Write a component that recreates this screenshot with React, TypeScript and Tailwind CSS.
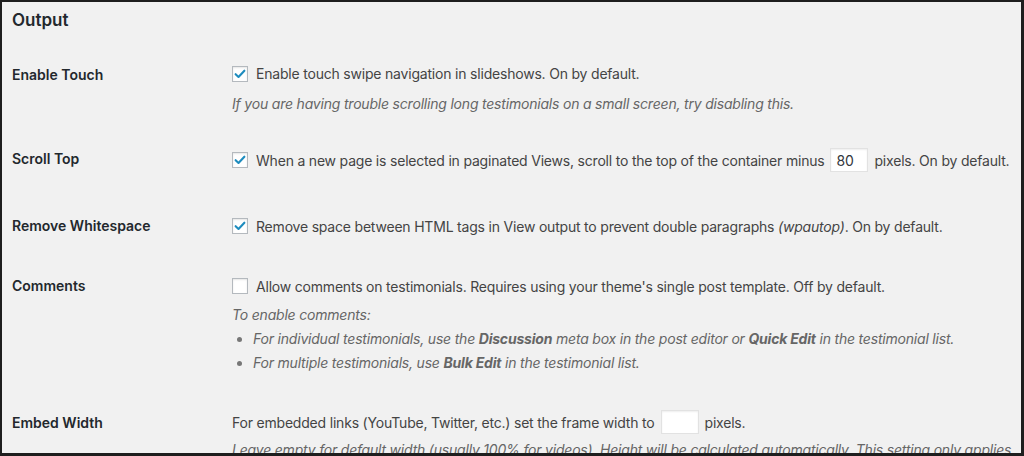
import React from "react";

const Check = ({ checked }: { checked: boolean }) => (
  <span className="inline-flex h-4 w-4 shrink-0 items-center justify-center border border-[#b4b9be] bg-white shadow-[inset_0_1px_2px_rgba(0,0,0,0.1)]">
    {checked && (
      <svg viewBox="0 0 16 16" className="h-[14px] w-[14px]">
        <path d="M3 8.2 L6.3 11.4 L13 4.2" fill="none" stroke="#1e8cbe" strokeWidth="2.4" strokeLinecap="round" strokeLinejoin="round" />
      </svg>
    )}
  </span>
);

const Label = ({ children }: { children: React.ReactNode }) => (
  <div className="w-[220px] shrink-0 text-[14px] font-semibold tracking-normal text-[#23282d]">{children}</div>
);

const Input = ({ value }: { value: string }) => (
  <span className="mx-[6px] inline-flex h-[24px] w-[38px] shrink-0 items-center border border-[#e2e2e2] bg-white px-[5px] text-[14px] text-[#32373c] shadow-[inset_0_1px_2px_rgba(0,0,0,0.07)]">
    {value}
  </span>
);

export default function App() {
  return (
    <div
      className="h-[456px] w-[1024px] overflow-hidden whitespace-nowrap border-t-[2px] border-l-[2px] border-r-[3px] border-b-[3px] border-[#1e1e1e] bg-[#f1f1f1] pl-[10px] text-[14px] tracking-[-0.2px] text-[#444]"
      style={{ fontFamily: "Inter, 'Noto Sans', 'Liberation Sans', sans-serif" }}
    >
      <h2 className="mt-[6px] h-[24px] text-[17px] font-semibold leading-[24px] tracking-normal text-[#23282d]">Output</h2>

      {/* Enable Touch */}
      <div className="mt-[32px] flex">
        <Label>
          <div className="leading-[20px] pt-[1px]">Enable Touch</div>
        </Label>
        <div>
          <div className="flex h-[20px] items-center gap-[8px] leading-[20px]">
            <Check checked />
            <span>Enable touch swipe navigation in slideshows. On by default.</span>
          </div>
          <div className="mt-[10px] leading-[20px] italic text-[#666]">
            If you are having trouble scrolling long testimonials on a small screen, try disabling this.
          </div>
        </div>
      </div>

      {/* Scroll Top */}
      <div className="mt-[34px] flex items-center">
        <Label>
          <div className="leading-[20px] -mt-[3px]">Scroll Top</div>
        </Label>
        <div className="flex h-[24px] items-center">
          <Check checked />
          <span className="ml-[8px]">When a new page is selected in paginated Views, scroll to the top of the container minus</span>
          <Input value="80" />
          <span>pixels. On by default.</span>
        </div>
      </div>

      {/* Remove Whitespace */}
      <div className="mt-[44px] flex items-center">
        <Label>
          <div className="leading-[20px]">Remove Whitespace</div>
        </Label>
        <div className="flex h-[20px] items-center gap-[8px]">
          <Check checked />
          <span>
            Remove space between HTML tags in View output to prevent double paragraphs <em>(wpautop)</em>. On by default.
          </span>
        </div>
      </div>

      {/* Comments */}
      <div className="mt-[40px] flex">
        <Label>
          <div className="leading-[20px]">Comments</div>
        </Label>
        <div>
          <div className="flex h-[20px] items-center gap-[8px]">
            <Check checked={false} />
            <span>Allow comments on testimonials. Requires using your theme's single post template. Off by default.</span>
          </div>
          <div className="mt-[9px] leading-[20px] italic text-[#666]">To enable comments:</div>
          <ul className="mt-[4px] space-y-[4px] italic text-[#666]">
            <li className="flex items-center leading-[20px]">
              <span className="ml-[5px] mr-[11px] inline-block h-[5px] w-[5px] rounded-full bg-[#777]" />
              <span>
                For individual testimonials, use the <b className="font-bold">Discussion</b> meta box in the post editor or{" "}
                <b className="font-bold">Quick Edit</b> in the testimonial list.
              </span>
            </li>
            <li className="flex items-center leading-[20px]">
              <span className="ml-[5px] mr-[11px] inline-block h-[5px] w-[5px] rounded-full bg-[#777]" />
              <span>
                For multiple testimonials, use <b className="font-bold">Bulk Edit</b> in the testimonial list.
              </span>
            </li>
          </ul>
        </div>
      </div>

      {/* Embed Width */}
      <div className="mt-[37px] flex">
        <Label>
          <div className="leading-[24px] pt-[1px]">Embed Width</div>
        </Label>
        <div>
          <div className="flex h-[24px] items-center">
            <span>For embedded links (YouTube, Twitter, etc.) set the frame width to</span>
            <Input value="" />
            <span>pixels.</span>
          </div>
          <div className="mt-[6px] leading-[20px] italic text-[#666]">
            Leave empty for default width (usually 100% for videos). Height will be calculated automatically. This setting only applies
          </div>
        </div>
      </div>
    </div>
  );
}
